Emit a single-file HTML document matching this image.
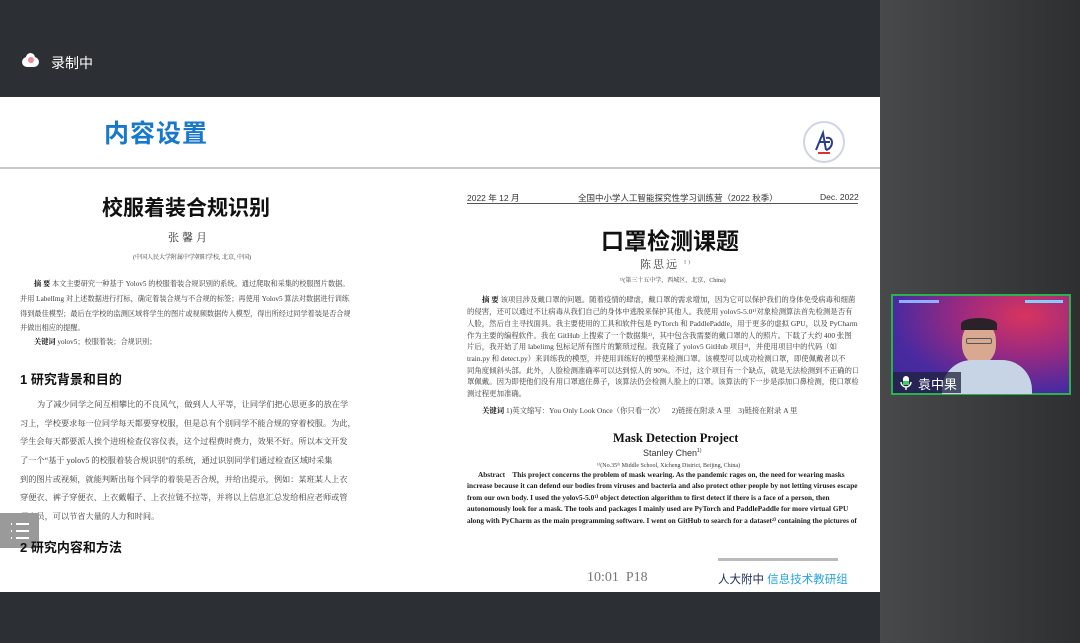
<!DOCTYPE html>
<html><head><meta charset="utf-8"><style>
*{margin:0;padding:0;box-sizing:border-box}
body{width:1080px;height:643px;overflow:hidden;background:#2c2f33;font-family:"Liberation Sans","Noto Sans CJK SC",sans-serif;position:relative}
.a{position:absolute;white-space:nowrap;overflow:hidden}
.serif{font-family:"Liberation Serif","Noto Serif CJK SC",serif}
.ln{position:absolute;white-space:nowrap;overflow:hidden;font-family:"Liberation Serif","Noto Serif CJK SC",serif;color:#3a3a3a}
</style></head><body>
<div class="a" style="left:0;top:0;width:880px;height:97px;background:#2c2f33"></div>
<div class="a" style="left:880px;top:0;width:200px;height:643px;background:linear-gradient(90deg,#48494b,#2e2f31)"></div>
<div class="a" style="left:22px;top:57px;width:17px;height:10px;background:#fff;border-radius:6px"></div>
<div class="a" style="left:26px;top:53px;width:9px;height:9px;background:#fff;border-radius:50%"></div>
<div class="a" style="left:28px;top:57px;width:6px;height:6px;background:#f28a99;border-radius:50%"></div>
<div class="a" style="left:51px;top:53px;font-size:14px;color:#fff">录制中</div>

<div class="a" style="left:0;top:97px;width:880px;height:495px;background:#fff"></div>
<div class="a" style="left:104px;top:114px;font-size:25px;font-weight:bold;color:#1879cc;letter-spacing:1px">内容设置</div>
<div class="a" style="left:0;top:167px;width:880px;height:2px;background:#c8c8c8"></div>
<div class="a" style="left:803px;top:121px;width:42px;height:42px;border-radius:50%;border:2px solid #d0d4e4"></div>
<svg class="a" style="left:810px;top:128px" width="28" height="28"><path d="M6 22 L13 5 L16 22 M9 14 H20 M16 10 C24 8 24 20 16 22" stroke="#2a3d8f" stroke-width="2" fill="none"/><rect x="8" y="24" width="12" height="2" fill="#d33"/></svg>

<!-- left doc -->
<div class="a" style="left:102px;top:192px;font-size:21px;font-weight:bold;color:#111">校服着装合规识别</div>
<div class="a serif" style="left:168px;top:229px;font-size:11px;color:#333;letter-spacing:3px">张馨月</div>
<div class="ln" style="left:133px;top:252px;font-size:6px">(中国人民大学附属中学朝阳学校, 北京, 中国)</div>
<div class="ln" style="left:34px;top:279px;font-size:7.2px;width:320px"><b style="color:#111">摘 要</b> 本文主要研究一种基于 Yolov5 的校服着装合规识别的系统。通过爬取和采集的校服图片数据。</div>
<div class="ln" style="left:20px;top:294px;font-size:7.2px;width:330px">并用 LabelImg 对上述数据进行打标，确定着装合规与不合规的标签；再使用 Yolov5 算法对数据进行训练，</div>
<div class="ln" style="left:20px;top:309px;font-size:7.2px;width:330px">得到最佳模型；最后在学校的监测区域将学生的图片或视频数据传入模型，得出所经过同学着装是否合规，</div>
<div class="ln" style="left:20px;top:323px;font-size:7.2px">并做出相应的提醒。</div>
<div class="ln" style="left:34px;top:337px;font-size:7.2px"><b style="color:#111">关键词</b> yolov5；校服着装；合规识别；</div>
<div class="a" style="left:20px;top:369px;font-size:13px;font-weight:bold;color:#111">1 研究背景和目的</div>
<div class="ln" style="left:37px;top:399px;font-size:8.2px;width:314px">为了减少同学之间互相攀比的不良风气，做到人人平等，让同学们把心思更多的放在学</div>
<div class="ln" style="left:20px;top:418px;font-size:8.2px;width:331px">习上，学校要求每一位同学每天都要穿校服，但是总有个别同学不能合规的穿着校服。为此，</div>
<div class="ln" style="left:20px;top:436px;font-size:8.2px;width:331px">学生会每天都要派人挨个进班检查仪容仪表，这个过程费时费力，效果不好。所以本文开发</div>
<div class="ln" style="left:20px;top:455px;font-size:8.2px;width:331px">了一个“基于 yolov5 的校服着装合规识别”的系统，通过识别同学们通过检查区域时采集</div>
<div class="ln" style="left:20px;top:474px;font-size:8.2px;width:331px">到的图片或视频，就能判断出每个同学的着装是否合规，并给出提示，例如：某班某人上衣</div>
<div class="ln" style="left:20px;top:492px;font-size:8.2px;width:331px">穿便衣、裤子穿便衣、上衣戴帽子、上衣拉链不拉等，并将以上信息汇总发给相应老师或管</div>
<div class="ln" style="left:20px;top:511px;font-size:8.2px">理人员，可以节省大量的人力和时间。</div>
<div class="a" style="left:0;top:513px;width:39px;height:35px;background:#9a9a9a"></div>
<svg class="a" style="left:9px;top:520px" width="22" height="22"><g stroke="#fff" stroke-width="2"><line x1="2" y1="4" x2="3" y2="4"/><line x1="7" y1="4" x2="20" y2="4"/><line x1="2" y1="11" x2="3" y2="11"/><line x1="7" y1="11" x2="20" y2="11"/><line x1="2" y1="18" x2="3" y2="18"/><line x1="7" y1="18" x2="20" y2="18"/></g></svg>
<div class="a" style="left:20px;top:537px;font-size:13px;font-weight:bold;color:#111">2 研究内容和方法</div>

<!-- right doc -->
<div class="a" style="left:467px;top:192px;font-size:8.5px;color:#333">2022 年 12 月</div>
<div class="a" style="left:578px;top:192px;font-size:8.5px;color:#333">全国中小学人工智能探究性学习训练营（2022 秋季）</div>
<div class="a" style="left:820px;top:192px;font-size:8.5px;color:#333">Dec. 2022</div>
<div class="a" style="left:467px;top:203px;width:391px;height:1px;background:#555"></div>
<div class="a" style="left:601px;top:222px;font-size:23px;font-weight:bold;color:#111">口罩检测课题</div>
<div class="ln" style="left:640px;top:256px;font-size:11px;letter-spacing:2px">陈思远 <sup style="font-size:5px">1)</sup></div>
<div class="ln" style="left:620px;top:275px;font-size:6px">¹⁾(第三十五中学，西城区，北京，China)</div>
<div class="ln" style="left:482px;top:294px;font-size:7.4px;width:376px"><b style="color:#111">摘 要</b> 该项目涉及戴口罩的问题。随着疫情的肆虐，戴口罩的需求增加，因为它可以保护我们的身体免受病毒和细菌</div>
<div class="ln" style="left:467px;top:306px;font-size:7.4px;width:391px">的侵害，还可以通过不让病毒从我们自己的身体中逃脱来保护其他人。我使用 yolov5-5.0¹⁾对象检测算法首先检测是否有</div>
<div class="ln" style="left:467px;top:318px;font-size:7.4px;width:391px">人脸，然后自主寻找面具。我主要使用的工具和软件包是 PyTorch 和 PaddlePaddle，用于更多的虚拟 GPU，以及 PyCharm</div>
<div class="ln" style="left:467px;top:330px;font-size:7.4px;width:391px">作为主要的编程软件。我在 GitHub 上搜索了一个数据集²⁾，其中包含我需要的戴口罩的人的照片。下载了大约 400 张图</div>
<div class="ln" style="left:467px;top:341px;font-size:7.4px;width:391px">片后，我开始了用 labelimg 包标记所有图片的繁琐过程。我克隆了 yolov5 GitHub 项目³⁾，并使用项目中的代码（如</div>
<div class="ln" style="left:467px;top:353px;font-size:7.4px;width:391px">train.py 和 detect.py）来训练我的模型，并使用训练好的模型来检测口罩。该模型可以成功检测口罩，即使佩戴者以不</div>
<div class="ln" style="left:467px;top:365px;font-size:7.4px;width:391px">同角度倾斜头部。此外，人脸检测准确率可以达到惊人的 90%。不过，这个项目有一个缺点，就是无法检测到不正确的口</div>
<div class="ln" style="left:467px;top:376px;font-size:7.4px;width:391px">罩佩戴。因为即使他们没有用口罩遮住鼻子，该算法仍会检测人脸上的口罩。该算法的下一步是添加口鼻检测，使口罩检</div>
<div class="ln" style="left:467px;top:388px;font-size:7.4px">测过程更加准确。</div>
<div class="ln" style="left:482px;top:405px;font-size:7.4px"><b style="color:#111">关键词</b> 1)英文缩写：You Only Look Once（你只看一次）&nbsp;&nbsp;&nbsp; 2)链接在附录 A 里 &nbsp;&nbsp;&nbsp;3)链接在附录 A 里</div>
<div class="a serif" style="left:613px;top:431px;font-size:12.5px;font-weight:bold;color:#111">Mask Detection Project</div>
<div class="a" style="left:643px;top:448px;font-size:9px;color:#333">Stanley Chen<sup style="font-size:5px">1)</sup></div>
<div class="ln" style="left:597px;top:462px;font-size:6px">¹⁾(No.35ᵗʰ Middle School, Xicheng District, Beijing, China)</div>
<div class="ln" style="left:467px;top:470px;font-size:7.3px;font-weight:bold;color:#222;width:391px">&nbsp;&nbsp;&nbsp;&nbsp;&nbsp;&nbsp;Abstract&nbsp;&nbsp;&nbsp;&nbsp;This project concerns the problem of mask wearing. As the pandemic rages on, the need for wearing masks</div>
<div class="ln" style="left:467px;top:481px;font-size:7.3px;font-weight:bold;color:#222;width:391px">increase because it can defend our bodies from viruses and bacteria and also protect other people by not letting viruses escape</div>
<div class="ln" style="left:467px;top:493px;font-size:7.3px;font-weight:bold;color:#222;width:391px">from our own body. I used the yolov5-5.0¹⁾ object detection algorithm to first detect if there is a face of a person, then</div>
<div class="ln" style="left:467px;top:504px;font-size:7.3px;font-weight:bold;color:#222;width:391px">autonomously look for a mask. The tools and packages I mainly used are PyTorch and PaddlePaddle for more virtual GPU</div>
<div class="ln" style="left:467px;top:516px;font-size:7.3px;font-weight:bold;color:#222;width:391px">along with PyCharm as the main programming software. I went on GitHub to search for a dataset²⁾ containing the pictures of</div>

<div class="a" style="left:718px;top:558px;width:120px;height:3px;background:#bbb"></div>
<div class="a serif" style="left:587px;top:570px;font-size:14px;color:#777">10:01&nbsp; P18</div>
<div class="a" style="left:718px;top:571px;font-size:11.5px;color:#1e2d5a">人大附中 <span style="color:#2aa3df">信息技术教研组</span></div>

<!-- video -->
<div class="a" style="left:891px;top:294px;width:180px;height:101px;border:2px solid #2bb24c;background:radial-gradient(ellipse at 75% 20%,#d8345e 0%,#9b2a80 35%,#4a2aa0 70%,#3a2a98 100%)"></div>
<div class="a" style="left:899px;top:300px;width:40px;height:3px;background:#8fb0ff"></div>
<div class="a" style="left:1025px;top:300px;width:38px;height:3px;background:#7fd0ff"></div>
<div class="a" style="left:962px;top:322px;width:34px;height:42px;border-radius:45%;background:#d9a891"></div>
<div class="a" style="left:961px;top:318px;width:36px;height:12px;border-radius:50% 50% 0 0;background:#2a2228"></div>
<div class="a" style="left:966px;top:338px;width:26px;height:6px;border:1px solid #555;border-radius:2px"></div>
<div class="a" style="left:942px;top:360px;width:90px;height:34px;border-radius:30px 30px 0 0;background:#c7d4e6"></div>
<div class="a" style="left:893px;top:372px;width:68px;height:21px;background:rgba(30,35,60,.75)"></div>
<svg class="a" style="left:899px;top:375px" width="14" height="16"><rect x="4" y="1" width="6" height="9" rx="3" fill="#fff"/><rect x="4" y="6" width="6" height="4" fill="#3ecf5a"/><path d="M2 7a5 5 0 0 0 10 0M7 12v3" stroke="#fff" fill="none" stroke-width="1.4"/></svg>
<div class="a" style="left:918px;top:374px;font-size:13px;color:#fff">袁中果</div>
</body></html>
